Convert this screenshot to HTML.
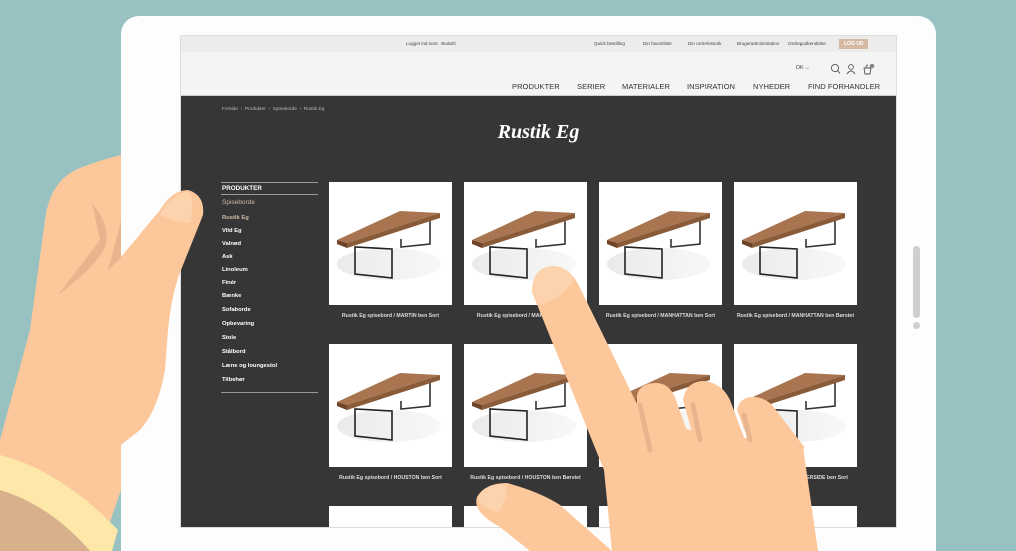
<!DOCTYPE html>
<html><head><meta charset="utf-8"><style>
*{margin:0;padding:0;box-sizing:border-box}
html,body{width:1016px;height:551px;overflow:hidden}
body{background:#97c2c1;font-family:"Liberation Sans",sans-serif;position:relative}
.tab{position:absolute;left:121px;top:16px;width:815px;height:535px;background:#fdfdfd;border-radius:18px 18px 0 0}
.btn{position:absolute;left:913px;top:246px;width:7px;height:72px;border-radius:4px;background:#cfcfcf}
.dot{position:absolute;left:913px;top:322px;width:7px;height:7px;border-radius:50%;background:#cfcfcf}
.scr{position:absolute;left:180px;top:35px;width:717px;height:493px;background:#363636;overflow:hidden;border:1px solid #ddd}
.top{position:absolute;left:0;top:0;width:100%;height:16px;background:#ececec;font-size:4.6px;color:#444}
.top span{position:absolute;top:5px}
.hdr{position:absolute;left:0;top:16px;width:100%;height:44px;background:#f4f4f4;border-bottom:1px solid #ccc}
.nav{position:absolute;top:30px;font-size:7.6px;color:#333}
.crumb{position:absolute;left:41px;top:71px;font-size:4.8px;color:#bbb}
.title{position:absolute;left:0;width:100%;top:85px;text-align:center;font:italic bold 20px "Liberation Serif",serif;color:#fff}
.side{position:absolute;left:40px;top:146px;width:97px;color:#fff;font-size:5.8px}
.side div{position:absolute;left:1px;font-weight:bold}
.card{position:absolute;width:123px;height:123px;background:#fff}
.cap{position:absolute;width:123px;text-align:center;font-size:5.2px;font-weight:bold;color:#ddd;line-height:8px}
</style></head><body>
<svg width="0" height="0" style="position:absolute"><defs>
<linearGradient id="sh" x1="0" y1="0" x2="1" y2="0"><stop offset="0" stop-color="#eaeaea"/><stop offset="1" stop-color="#f8f8f8"/></linearGradient>
<symbol id="t" viewBox="0 0 123 123">
<ellipse cx="60" cy="82" rx="52" ry="16" fill="url(#sh)"/>
<polygon points="26,65 26,92 63,96 63,67" fill="none" stroke="#222" stroke-width="1.6"/>
<polyline points="72,57 72,65 101,62 101,37" fill="none" stroke="#333" stroke-width="1.6"/>
<polygon points="8,58 71,29 111,31 18,61" fill="#a87550"/>
<polygon points="8,58 18,61 18,66 8,62" fill="#6e4428"/>
<polygon points="18,61 111,31 111,36 18,66" fill="#8a5b38"/>
</symbol></defs></svg>
<div class="tab"></div><div class="btn"></div><div class="dot"></div>
<div class="scr">
<div class="top"><span style="left:225px">Logget ind som: &nbsp;Bodahl</span><span style="left:413px">Quick bestilling</span><span style="left:462px">Din favoritliste</span><span style="left:507px">Din ordrehistorik</span><span style="left:556px">Brugeradministration</span><span style="left:607px">Ordregodkendelse</span><span style="left:658px;top:3px;background:#d5b9a1;color:#fff;padding:2px 5px;font-weight:bold;font-size:5px">LOG UD</span></div>
<div class="hdr">
<span style="position:absolute;left:615px;top:13px;font-size:5.5px;color:#444">DK ⌵</span>
<svg style="position:absolute;left:648px;top:11px" width="50" height="12" viewBox="0 0 50 12" fill="none" stroke="#555" stroke-width=".9"><circle cx="6" cy="5" r="3.6"/><path d="M8.7 7.7 11 10.5"/><circle cx="22" cy="4" r="2.4"/><path d="M18 11q4-6 8 0"/><path d="M35 5h7l-1 6h-5zM37 5q0-3 2-3"/><circle cx="43" cy="3" r="2.3" fill="#888" stroke="none"/></svg>
<span class="nav" style="left:331px">PRODUKTER</span><span class="nav" style="left:396px">SERIER</span><span class="nav" style="left:441px">MATERIALER</span><span class="nav" style="left:506px">INSPIRATION</span><span class="nav" style="left:572px">NYHEDER</span><span class="nav" style="left:627px">FIND FORHANDLER</span>
</div>
<div class="crumb">Forside &nbsp;›&nbsp; Produkter &nbsp;›&nbsp; Spiseborde &nbsp;›&nbsp; Rustik Eg</div>
<div class="title">Rustik Eg</div>
<div class="side">
<div style="top:0;left:0;right:0;border-top:1px solid #999;border-bottom:1px solid #999;padding:2px 0 2px 1px;position:absolute;font-size:6.3px">PRODUKTER</div>
<div style="top:17px;color:#d5b9a1;font-size:6.5px;font-weight:normal">Spiseborde</div>
<div style="top:33px;color:#d5b9a1">Rustik Eg</div><div style="top:46px">Vild Eg</div><div style="top:59px">Valnød</div><div style="top:72px">Ask</div><div style="top:85px">Linoleum</div><div style="top:98px">Finér</div><div style="top:111px">Bænke</div><div style="top:125px">Sofaborde</div><div style="top:139px">Opbevaring</div><div style="top:153px">Stole</div><div style="top:167px">Stålbord</div><div style="top:181px">Læne og loungestol</div><div style="top:195px">Tilbehør</div>
<div style="top:210px;left:0;right:0;border-top:1px solid #999"></div>
</div>
<div class="card" style="left:148px;top:146px"><svg width="123" height="123"><use href="#t"/></svg></div>
<div class="card" style="left:283px;top:146px"><svg width="123" height="123"><use href="#t"/></svg></div>
<div class="card" style="left:418px;top:146px"><svg width="123" height="123"><use href="#t"/></svg></div>
<div class="card" style="left:553px;top:146px"><svg width="123" height="123"><use href="#t"/></svg></div>
<div class="cap" style="left:148px;top:276px">Rustik Eg spisebord / MARTIN ben Sort</div>
<div class="cap" style="left:283px;top:276px">Rustik Eg spisebord / MARTIN ben Sort</div>
<div class="cap" style="left:418px;top:276px">Rustik Eg spisebord / MANHATTAN ben Sort</div>
<div class="cap" style="left:553px;top:276px">Rustik Eg spisebord / MANHATTAN ben Børstet</div>
<div class="card" style="left:148px;top:308px"><svg width="123" height="123"><use href="#t"/></svg></div>
<div class="card" style="left:283px;top:308px"><svg width="123" height="123"><use href="#t"/></svg></div>
<div class="card" style="left:418px;top:308px"><svg width="123" height="123"><use href="#t"/></svg></div>
<div class="card" style="left:553px;top:308px"><svg width="123" height="123"><use href="#t"/></svg></div>
<div class="cap" style="left:148px;top:438px">Rustik Eg spisebord / HOUSTON ben Sort</div>
<div class="cap" style="left:283px;top:438px">Rustik Eg spisebord / HOUSTON ben Børstet</div>
<div class="cap" style="left:418px;top:438px">Rustik Eg spisebord / RIVERSIDE ben Sort</div>
<div class="cap" style="left:553px;top:438px">Rustik Eg spisebord / RIVERSIDE ben Sort</div>
<div class="card" style="left:148px;top:470px"></div><div class="card" style="left:283px;top:470px"></div><div class="card" style="left:418px;top:470px"></div><div class="card" style="left:553px;top:470px"></div>
</div>
<svg style="position:absolute;left:0;top:0" width="1016" height="551" viewBox="0 0 1016 551">
<path d="M0,440 L30,330 L45,220 Q50,180 80,168 Q100,160 121,155 L121,257 L160,210 Q172,190 188,190 Q205,195 203,215 L183,265 Q172,290 168,330 L165,370 Q158,410 140,430 L121,445 L121,490 L100,551 L0,551 Z" fill="#fcc89b"/>
<path d="M92,203 Q110,225 106,245 Q98,265 58,295 Q85,260 100,240 Z" fill="#e7b48e"/>
<path d="M121,220 L121,258 L108,270 Q115,245 121,220Z" fill="#e7b48e"/>
<path d="M160,215 Q170,195 188,192 Q196,200 190,223 Q175,222 160,215Z" fill="#fdd3ae"/>
<path d="M0,455 Q60,470 118,530 L112,551 L90,551 Q50,505 0,490 Z" fill="#fde8a9"/>
<path d="M0,490 Q50,505 90,551 L0,551 Z" fill="#d9b08c"/>
<path d="M477,497 Q485,483 507,483 Q540,492 560,505 L612,551 L530,551 L500,527 Q472,512 477,497Z" fill="#fcc89b"/>
<path d="M478,497 Q485,484 505,484 Q510,498 498,512 Q480,508 478,497Z" fill="#fdd3ae"/>
<path d="M637,420 L637,395 Q640,383 656,383 Q670,383 676,400 L690,440 L650,460Z" fill="#fcc89b"/>
<path d="M683,400 Q686,381 704,381 Q722,383 730,400 L745,440 L700,460Z" fill="#fcc89b"/>
<path d="M737,410 Q740,396 755,397 Q768,398 776,410 L805,448 L760,470Z" fill="#fcc89b"/>
<path d="M532,292 Q532,268 552,266 Q570,266 580,288 L640,410 L690,430 L760,440 L803,447 L818,551 L612,551 L604,470 Z" fill="#fcc89b"/>
<path d="M532,292 Q532,268 552,266 Q566,266 574,280 Q560,300 540,305 Z" fill="#fdd3ae"/>
<path d="M640,405 L650,450" stroke="#e7b48e" stroke-width="5" stroke-linecap="round"/>
<path d="M693,405 L700,440" stroke="#e7b48e" stroke-width="5" stroke-linecap="round"/>
<path d="M744,415 L750,440" stroke="#e7b48e" stroke-width="5" stroke-linecap="round"/>
</svg>
</body></html>
